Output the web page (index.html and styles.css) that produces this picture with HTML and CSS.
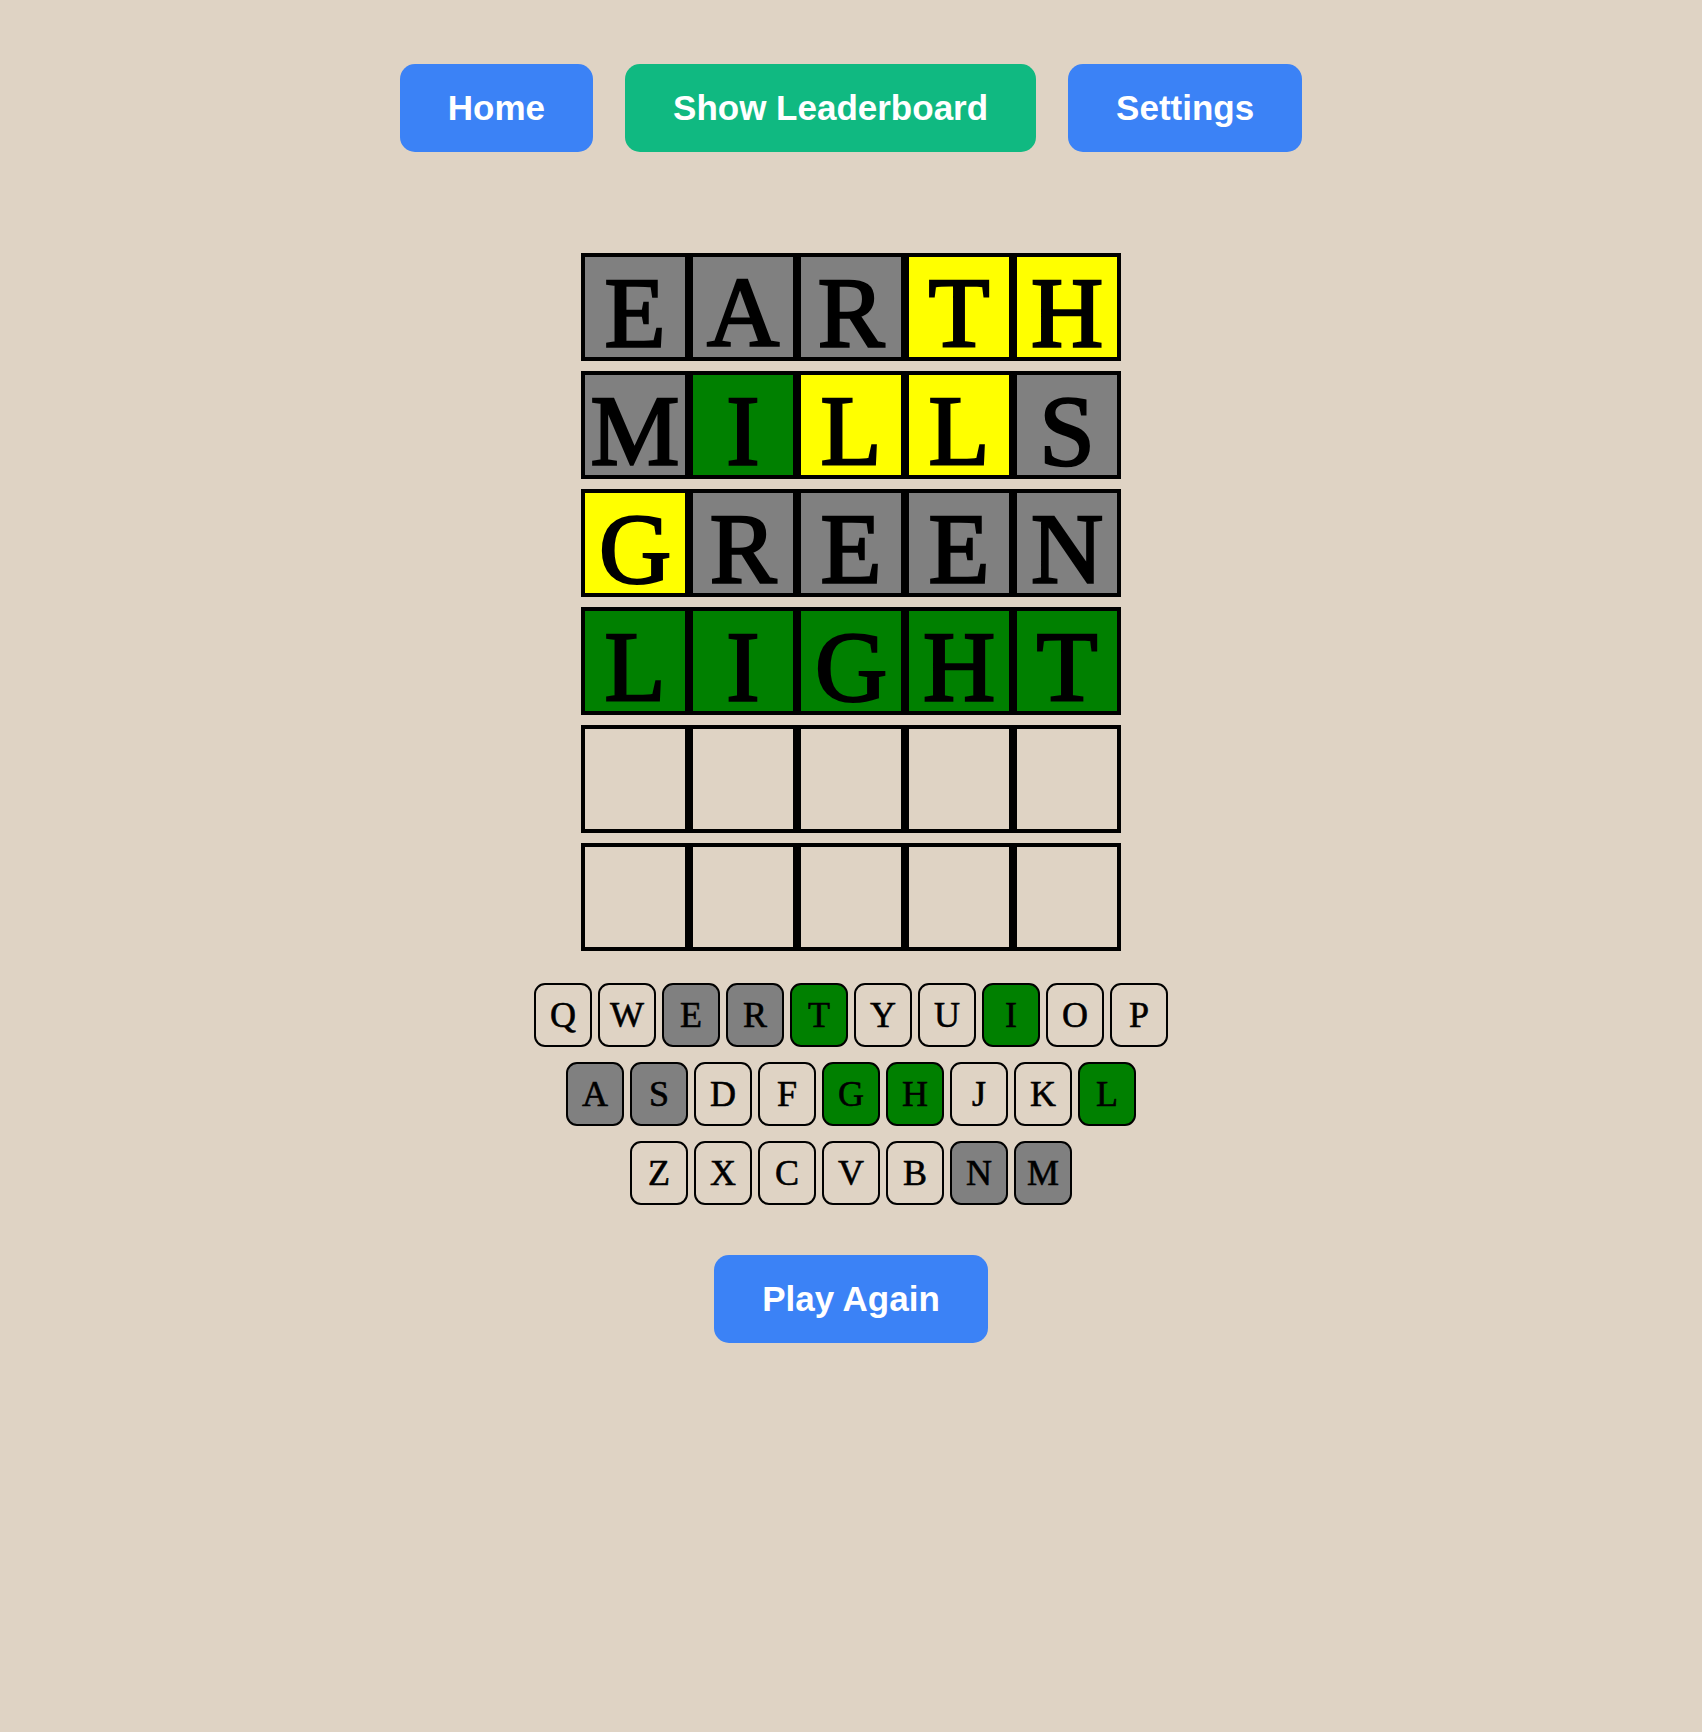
FILE: index.html
```html
<!DOCTYPE html>
<html lang="en">
<head>
<meta charset="utf-8">
<title>Wordle</title>
<link rel="stylesheet" href="styles.css">
</head>
<body>
<div class="app">
  <nav class="nav">
    <button class="btn btn-blue">Home</button>
    <button class="btn btn-green">Show Leaderboard</button>
    <button class="btn btn-blue">Settings</button>
  </nav>

  <div class="board">
    <div class="row">
      <div class="cell gray">E</div><div class="cell gray">A</div><div class="cell gray">R</div><div class="cell yellow">T</div><div class="cell yellow">H</div>
    </div>
    <div class="row">
      <div class="cell gray">M</div><div class="cell green">I</div><div class="cell yellow">L</div><div class="cell yellow">L</div><div class="cell gray">S</div>
    </div>
    <div class="row">
      <div class="cell yellow">G</div><div class="cell gray">R</div><div class="cell gray">E</div><div class="cell gray">E</div><div class="cell gray">N</div>
    </div>
    <div class="row">
      <div class="cell green">L</div><div class="cell green">I</div><div class="cell green">G</div><div class="cell green">H</div><div class="cell green">T</div>
    </div>
    <div class="row">
      <div class="cell"></div><div class="cell"></div><div class="cell"></div><div class="cell"></div><div class="cell"></div>
    </div>
    <div class="row">
      <div class="cell"></div><div class="cell"></div><div class="cell"></div><div class="cell"></div><div class="cell"></div>
    </div>
  </div>

  <div class="keyboard">
    <div class="krow">
      <div class="key">Q</div><div class="key">W</div><div class="key gray">E</div><div class="key gray">R</div><div class="key green">T</div><div class="key">Y</div><div class="key">U</div><div class="key green">I</div><div class="key">O</div><div class="key">P</div>
    </div>
    <div class="krow">
      <div class="key gray">A</div><div class="key gray">S</div><div class="key">D</div><div class="key">F</div><div class="key green">G</div><div class="key green">H</div><div class="key">J</div><div class="key">K</div><div class="key green">L</div>
    </div>
    <div class="krow">
      <div class="key">Z</div><div class="key">X</div><div class="key">C</div><div class="key">V</div><div class="key">B</div><div class="key gray">N</div><div class="key gray">M</div>
    </div>
  </div>

  <div class="actions">
    <button class="btn btn-blue">Play Again</button>
  </div>
</div>
</body>
</html>
```

FILE: styles.css
```css
html, body {
  margin: 0;
  padding: 0;
  background: #dfd3c4;
}

body {
  min-height: 1732px;
  font-family: "Liberation Serif", "Times New Roman", serif;
}

.app {
  display: flex;
  flex-direction: column;
  align-items: center;
  padding-top: 64px;
}

.nav {
  display: flex;
  gap: 32px;
  justify-content: center;
}

.btn {
  font-family: "Liberation Sans", Arial, sans-serif;
  font-weight: bold;
  font-size: 35px;
  line-height: 40px;
  color: #ffffff;
  border: none;
  border-radius: 15px;
  padding: 24px 48px;
  height: 88px;
  cursor: pointer;
}

.btn-blue {
  background: #3b82f6;
}

.btn-green {
  background: #10b981;
}

.board {
  margin-top: 101px;
  display: flex;
  flex-direction: column;
  gap: 10px;
}

.row {
  display: flex;
}

.cell {
  box-sizing: border-box;
  width: 108px;
  height: 108px;
  border: 4px solid #000;
  display: flex;
  align-items: center;
  justify-content: center;
  padding-top: 12px;
  font-size: 100px;
  line-height: 1;
  color: #000;
  -webkit-text-stroke: 2.5px #000;
}

.cell.gray { background: #808080; }
.cell.green { background: #008000; }
.cell.yellow { background: #ffff00; }

.keyboard {
  margin-top: 32px;
  display: flex;
  flex-direction: column;
  align-items: center;
  gap: 15px;
}

.krow {
  display: flex;
}

.key {
  box-sizing: border-box;
  width: 58px;
  height: 64px;
  margin: 0 3px;
  border: 2px solid #000;
  border-radius: 11px;
  font-size: 36px;
  display: flex;
  align-items: center;
  justify-content: center;
  color: #000;
  -webkit-text-stroke: 0.6px #000;
}

.key.gray { background: #808080; }
.key.green { background: #008000; }

.actions {
  margin-top: 50px;
}
```
